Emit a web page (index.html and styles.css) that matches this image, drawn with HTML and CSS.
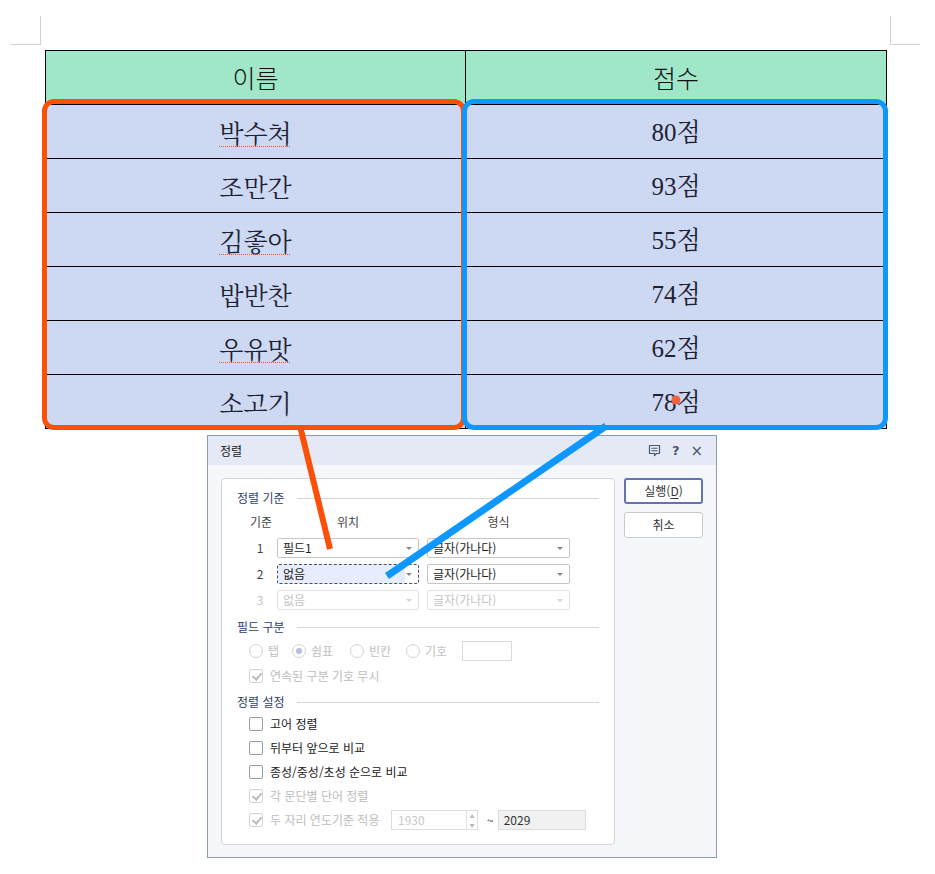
FILE: index.html
```html
<!DOCTYPE html>
<html lang="ko">
<head>
<meta charset="utf-8">
<title>정렬</title>
<link rel="stylesheet" href="styles.css">
</head>
<body>
<div class="page">
  <div class="marks">
    <div class="mark mark-l"></div>
    <div class="mark mark-r"></div>
  </div>

  <div class="score">
    <div class="cell head">이름</div>
    <div class="cell head">점수</div>
    <div class="cell"><span class="spell">박수쳐</span></div>
    <div class="cell num">80점</div>
    <div class="cell">조만간</div>
    <div class="cell num">93점</div>
    <div class="cell"><span class="spell">김좋아</span></div>
    <div class="cell num">55점</div>
    <div class="cell">밥반찬</div>
    <div class="cell num">74점</div>
    <div class="cell"><span class="spell">우유맛</span></div>
    <div class="cell num">62점</div>
    <div class="cell">소고기</div>
    <div class="cell num">78점</div>
  </div>

  <div class="dialog">
    <div class="titlebar">
      <span class="title">정렬</span>
      <div class="ticons">
        <svg class="ico-note" width="13" height="13" viewBox="0 0 13 13">
          <path d="M1.5 1.5h10v8h-3l-2 2v-2h-5z" fill="none" stroke="#4b5670" stroke-width="1.2" stroke-linejoin="round"/>
          <path d="M3.5 4.3h6M3.5 6.8h6" stroke="#4b5670" stroke-width="1.1"/>
        </svg>
        <span class="ico-q">?</span>
        <span class="ico-x">×</span>
      </div>
    </div>
    <div class="dbody">
      <div class="group">
        <div class="sec"><span>정렬 기준</span></div>
        <div class="sortgrid">
          <span class="colh idx">기준</span>
          <span class="colh">위치</span>
          <span class="colh c3">형식</span>

          <span class="idx">1</span>
          <div class="combo"><span>필드1</span><i class="arr"></i></div>
          <div class="combo c3"><span>글자(가나다)</span><i class="arr"></i></div>

          <span class="idx">2</span>
          <div class="combo focus"><span>없음</span><i class="arr"></i></div>
          <div class="combo c3"><span>글자(가나다)</span><i class="arr"></i></div>

          <span class="idx dis">3</span>
          <div class="combo dis"><span>없음</span><i class="arr"></i></div>
          <div class="combo c3 dis"><span>글자(가나다)</span><i class="arr"></i></div>
        </div>

        <div class="sec sec2"><span>필드 구분</span></div>
        <div class="radios">
          <label class="radio r1"><i class="rb"></i>탭</label>
          <label class="radio r2"><i class="rb on"></i>쉼표</label>
          <label class="radio r3"><i class="rb"></i>빈칸</label>
          <label class="radio r4"><i class="rb"></i>기호</label>
          <span class="symbox"></span>
        </div>
        <div class="chk dis row-sep"><i class="cb checked"></i><span>연속된 구분 기호 무시</span></div>

        <div class="sec sec3"><span>정렬 설정</span></div>
        <div class="chks">
          <div class="chk"><i class="cb"></i><span>고어 정렬</span></div>
          <div class="chk"><i class="cb"></i><span>뒤부터 앞으로 비교</span></div>
          <div class="chk"><i class="cb"></i><span>종성/중성/초성 순으로 비교</span></div>
          <div class="chk dis"><i class="cb checked"></i><span>각 문단별 단어 정렬</span></div>
          <div class="chk dis"><i class="cb checked"></i><span class="yearlabel">두 자리 연도기준 적용</span><span class="spin"><span>1930</span><span class="spinbtn"><b>▲</b><b>▼</b></span></span><span class="tilde">~</span><span class="yearbox">2029</span></div>
        </div>
      </div>
      <div class="buttons">
        <div class="btn primary">실행(<u>D</u>)</div>
        <div class="btn">취소</div>
      </div>
    </div>
  </div>

  <div class="box box-orange"></div>
  <div class="box box-blue"></div>

  <svg class="overlay" width="935" height="874" viewBox="0 0 935 874">
    <line x1="300" y1="426" x2="330" y2="549" stroke="#fa5007" stroke-width="6"/>
    <line x1="606" y1="426" x2="387" y2="576" stroke="#0d97ff" stroke-width="7"/>
    <circle cx="676" cy="400" r="4.5" fill="#ef6343"/>
  </svg>
</div>
</body>
</html>
```

FILE: styles.css
```css
* { box-sizing: border-box; }
html, body { margin: 0; padding: 0; background: #fff; }

.page {
  position: relative;
  width: 935px;
  height: 874px;
  overflow: hidden;
  font-family: "Noto Sans CJK KR", "Noto Sans", sans-serif;
}

/* page corner marks */
.marks {
  height: 50px;
  display: flex;
  justify-content: space-between;
  padding: 16px 15px 0 11px;
}
.mark { width: 30px; height: 29px; border-bottom: 1px solid #d0d0d0; }
.mark-l { border-right: 1px solid #d0d0d0; }
.mark-r { border-left: 1px solid #d0d0d0; }

/* table */
.score {
  margin-left: 45px;
  width: 842px;
  display: grid;
  grid-template-columns: 420px 421px;
  border-top: 1px solid #000;
  border-left: 1px solid #000;
}
.cell {
  height: 54px;
  border-right: 1px solid #000;
  border-bottom: 1px solid #000;
  background: #cdd8f2;
  display: flex;
  align-items: center;
  justify-content: center;
  font-family: "Noto Serif CJK KR", "Noto Sans CJK KR", serif;
  font-size: 25px;
  color: #1f2233;
  line-height: 1;
  padding-top: 1px;
}
.cell.num { font-family: "Liberation Serif", "Noto Serif CJK KR", "Noto Sans CJK KR", serif; }
.cell.head {
  background: #a0e6c9;
  font-family: "Noto Sans CJK KR", sans-serif;
  font-weight: 300;
  color: #111;
  padding-top: 0;
}
.spell {
  text-decoration-line: underline;
  text-decoration-style: dotted;
  text-decoration-color: #d0603c;
  text-decoration-thickness: 1px;
  text-underline-offset: 3px;
}

/* highlight boxes */
.box {
  position: absolute;
  top: 99px;
  height: 331px;
  border: 5px solid;
  border-radius: 12px;
}
.box-orange { left: 42px; width: 424px; border-color: #fa5007; }
.box-blue { left: 462px; width: 426px; border-color: #0d97ff; }

.overlay { position: absolute; left: 0; top: 0; pointer-events: none; }

/* dialog */
.dialog {
  margin: 6px 0 0 207px;
  width: 510px;
  height: 423px;
  border: 1px solid #8a99bd;
  background: #f6f7fb;
  font-size: 12px;
  color: #333;
  line-height: 20px;
  white-space: nowrap;
}
.titlebar {
  height: 29px;
  background: #e5e9f5;
  display: flex;
  align-items: center;
  justify-content: space-between;
  padding: 0 13px 0 12px;
}
.title { font-size: 12px; color: #222; }
.ticons { display: flex; align-items: center; gap: 11px; color: #4b5670; }
.ico-note { display: block; }
.ico-q { font-family: "DejaVu Sans", sans-serif; font-weight: bold; font-size: 13px; }
.ico-x { font-family: "DejaVu Sans", sans-serif; font-size: 15px; }

.dbody {
  display: flex;
  align-items: flex-start;
  gap: 9px;
  padding: 13px 0 0 13px;
}
.group {
  flex: none;
  width: 394px;
  height: 367px;
  border: 1px solid #d2d4da;
  border-radius: 4px;
  background: #fff;
  padding: 9px 15px 0 15px;
}
.sec {
  height: 20px;
  display: flex;
  align-items: center;
  gap: 12px;
  color: #2d4273;
}
.sec::after { content: ""; flex: 1; border-top: 1px solid #d6d6d6; }
.sec2 { margin-top: 7px; }
.sec3 { margin-top: 6px; }

.sortgrid {
  margin: 4px 0 0 12px;
  display: grid;
  grid-template-columns: 28px 142px 151px;
  grid-template-rows: repeat(4, 20px);
  row-gap: 6px;
  align-items: center;
}
.colh { text-align: center; color: #444; }
.colh.c3 { padding-left: 8px; }
.idx { text-align: center; padding-right: 6px; color: #444; }
.colh.idx { padding-right: 4px; }
.idx.dis { color: #c4c4c4; }
.combo {
  height: 20px;
  border: 1px solid #c6c6c6;
  border-radius: 2px;
  background: #fff;
  display: flex;
  align-items: center;
  justify-content: space-between;
  padding-left: 5px;
  color: #222;
  line-height: 18px;
}
.combo.c3 { margin-left: 8px; }
.arr {
  width: 0; height: 0;
  margin-right: 6px;
  border-left: 3px solid transparent;
  border-right: 3px solid transparent;
  border-top: 3px solid #8a8a8a;
}
.combo.focus {
  border: 1px dashed #4a5068;
  background: linear-gradient(to right, #e7edfc 0, #e7edfc 127px, #fff 127px);
}
.combo.dis { border-color: #e2e2e2; color: #c4c4c4; }
.combo.dis .arr { border-top-color: #d2d2d2; }

.radios {
  margin: 4px 0 0 12px;
  height: 20px;
  display: flex;
  align-items: center;
  color: #c0c0c0;
}
.radio { flex: none; display: flex; align-items: center; gap: 5px; }
.r1 { width: 43px; }
.r2 { width: 58px; }
.r3 { width: 56px; }
.r4 { width: 56px; }
.rb {
  flex: none;
  width: 14px; height: 14px;
  border: 1px solid #d4d4d4;
  border-radius: 50%;
  background: #fff;
  display: flex; align-items: center; justify-content: center;
}
.rb.on::after { content: ""; width: 6px; height: 6px; border-radius: 50%; background: #b8bddb; }
.symbox { flex: none; width: 50px; height: 20px; border: 1px solid #dadada; background: #fff; }

.chk {
  margin-left: 12px;
  height: 20px;
  display: flex;
  align-items: center;
  gap: 7px;
  color: #222;
}
.chk.dis { color: #bdbdbd; }
.row-sep { margin-top: 5px; }
.cb {
  flex: none;
  width: 14px; height: 14px;
  border: 1px solid #9a9a9a;
  border-radius: 2px;
  background: #fff;
  position: relative;
}
.chk.dis .cb { border-color: #d4d4d4; }
.cb.checked::after {
  content: "";
  position: absolute;
  left: 4px; top: 1px;
  width: 4px; height: 7px;
  border-right: 2px solid #bcbcbc;
  border-bottom: 2px solid #bcbcbc;
  transform: rotate(40deg);
}
.chks { margin-top: 2px; display: flex; flex-direction: column; gap: 4px; }

.yearlabel { flex: none; width: 114px; }
.spin {
  flex: none;
  width: 87px; height: 20px;
  border: 1px solid #dedede;
  background: #fff;
  display: flex;
  justify-content: space-between;
  padding-left: 6px;
  color: #c8c8c8;
  line-height: 18px;
}
.spinbtn {
  width: 11px;
  border-left: 1px solid #e2e2e2;
  display: flex; flex-direction: column;
  font-size: 5px; line-height: 9px; text-align: center; color: #b8b8b8;
}
.spinbtn b { font-weight: normal; height: 9px; }
.tilde { flex: none; margin-left: 2px; color: #444; }
.yearbox {
  flex: none;
  margin-left: -3px;
  width: 88px; height: 20px;
  border: 1px solid #dcdcdc;
  background: #f1f1f1;
  color: #333;
  padding-left: 5px;
  line-height: 18px;
}

.buttons { flex: none; width: 79px; display: flex; flex-direction: column; gap: 8px; }
.btn {
  height: 26px;
  border: 1px solid #c9c9cf;
  border-radius: 3px;
  background: #fff;
  display: flex; align-items: center; justify-content: center;
  color: #333;
}
.btn.primary { border: 2px solid #6373b6; }
.btn u { text-underline-offset: 2px; }
```
